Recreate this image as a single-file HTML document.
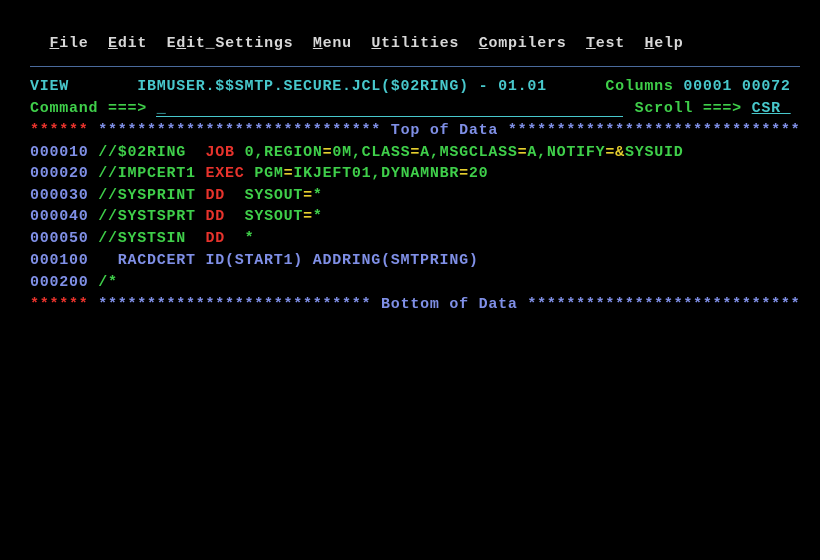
<!DOCTYPE html>
<html><head><meta charset="utf-8"><style>
body{margin:0;background:#000;width:820px;height:560px;overflow:hidden;position:relative}
.r{position:absolute;left:30px;white-space:pre;font-family:"Liberation Mono",monospace;font-size:15px;letter-spacing:0.75px;line-height:20px;color:#7f8fe6;font-weight:bold}
.g{color:#3fcf4a}.t{color:#48c8cc}.rd{color:#e8332c}.y{color:#e6cf2e}.b{color:#7f8fe6}.w{color:#d8d8d8}
u{text-decoration:underline}
</style></head><body>
<div class="r w" style="top:34px"><span>  <u>F</u>ile  <u>E</u>dit  E<u>d</u>it_Settings  <u>M</u>enu  <u>U</u>tilities  <u>C</u>ompilers  <u>T</u>est  <u>H</u>elp</span></div>
<div style="position:absolute;left:30px;top:66px;width:770px;height:1px;background:#4a6a9c"></div>
<div class="r t" style="top:77px">VIEW       IBMUSER.$$SMTP.SECURE.JCL($02RING) - 01.01      <span class="g">Columns</span> 00001 00072</div>
<div class="r g" style="top:99px">Command ===> <span class="t">_</span>                                                <span>Scroll ===> </span><span class="t"><u>CSR </u></span></div>
<div style="position:absolute;left:156px;top:116px;width:467px;height:1px;background:#48c8cc"></div>
<div class="r b" style="top:121px"><span class="rd">******</span> ***************************** Top of Data ******************************</div>
<div class="r" style="top:143px">000010 <span class="g">//$02RING  </span><span class="rd">JOB</span><span class="g"> 0,REGION</span><span class="y">=</span><span class="g">0M,CLASS</span><span class="y">=</span><span class="g">A,MSGCLASS</span><span class="y">=</span><span class="g">A,NOTIFY</span><span class="y">=&amp;</span><span class="g">SYSUID</span></div>
<div class="r" style="top:164px">000020 <span class="g">//IMPCERT1 </span><span class="rd">EXEC</span><span class="g"> PGM</span><span class="y">=</span><span class="g">IKJEFT01,DYNAMNBR</span><span class="y">=</span><span class="g">20</span></div>
<div class="r" style="top:186px">000030 <span class="g">//SYSPRINT </span><span class="rd">DD</span><span class="g">  SYSOUT</span><span class="y">=</span><span class="g">*</span></div>
<div class="r" style="top:207px">000040 <span class="g">//SYSTSPRT </span><span class="rd">DD</span><span class="g">  SYSOUT</span><span class="y">=</span><span class="g">*</span></div>
<div class="r" style="top:229px">000050 <span class="g">//SYSTSIN  </span><span class="rd">DD</span><span class="g">  *</span></div>
<div class="r" style="top:251px">000100   RACDCERT ID(START1) ADDRING(SMTPRING)</div>
<div class="r" style="top:273px">000200 <span class="g">/*</span></div>
<div class="r b" style="top:295px"><span class="rd">******</span> **************************** Bottom of Data ****************************</div>
</body></html>
